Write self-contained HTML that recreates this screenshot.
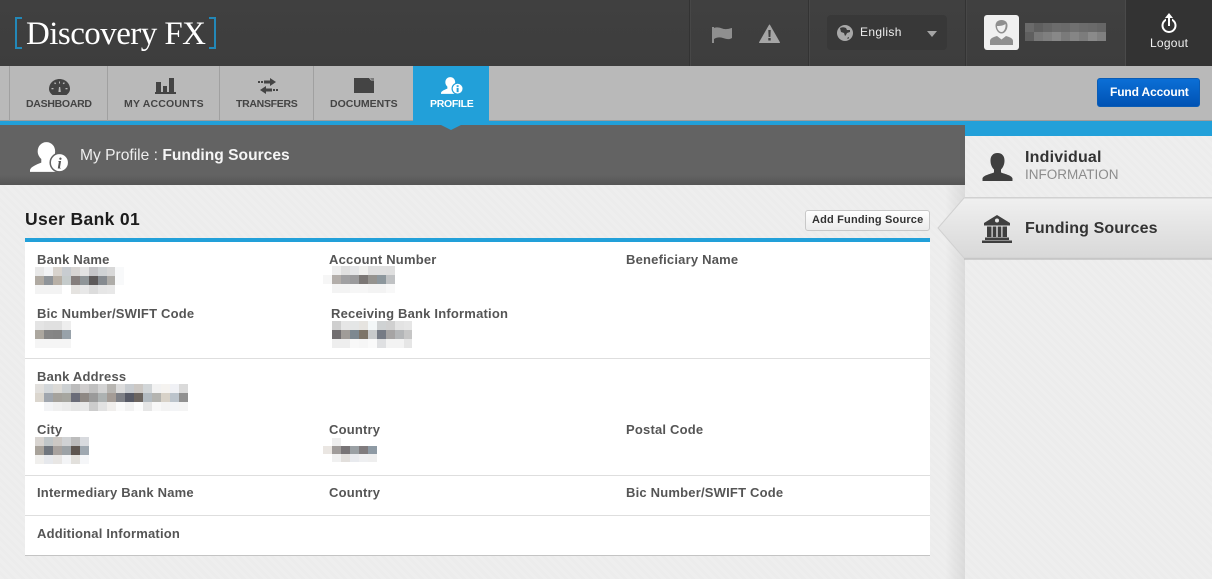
<!DOCTYPE html>
<html><head><meta charset="utf-8"><style>
*{box-sizing:border-box;margin:0;padding:0}
html,body{width:1212px;height:579px;overflow:hidden}
body{position:relative;font-family:"Liberation Sans",sans-serif;background:#ededed}
.a{position:absolute}
.t{position:absolute;white-space:nowrap}
#bg{left:0;top:185px;width:1212px;height:394px;background:repeating-linear-gradient(45deg,#eeeeee 0 3px,#ececec 3px 6px)}
#hd{left:0;top:0;width:1212px;height:66px;background:linear-gradient(#404040,#3d3d3d)}
.dv{top:0;height:66px;background:#333;border-right:1px solid #474747;width:2px}
#nav{left:0;top:66px;width:1212px;height:55px;background:#b9b9b9;border-bottom:1px solid #9d9d9d}
.tb{top:66px;height:55px;width:1px;background:#a0a0a0}
.tl{top:98px;font:bold 10.500px/12px "Liberation Sans",sans-serif;color:#444}
.lb{font:bold 13px/15px "Liberation Sans",sans-serif;color:#555;letter-spacing:.2px}
.hr{left:25px;width:905px;height:1px;background:#dedede}
.p{position:absolute;display:grid;grid-auto-rows:8.87px}
.p i{display:block}
</style></head><body>
<div class="a" id="bg"></div>
<div class="a" id="hd"></div>
<div class="a" style="left:15px;top:17px;width:7px;height:32px;border:2px solid #2388b8;border-right:0"></div>
<div class="t" style="left:26px;top:14px;font:33px/40px 'Liberation Serif',serif;color:#fff;letter-spacing:-.55px">Discovery FX</div>
<div class="a" style="left:209px;top:17px;width:7px;height:32px;border:2px solid #2388b8;border-left:0"></div>
<div class="a dv" style="left:689px"></div><div class="a dv" style="left:808px"></div><div class="a dv" style="left:965px"></div>
<div class="a" style="left:1125px;top:0;width:87px;height:66px;background:#333;border-left:1px solid #4a4a4a"></div>
<svg class="a" style="left:712px;top:26px" width="21" height="17" viewBox="0 0 21 17"><path fill="#8f8f8f" d="M0 1h2v16H0zM2 2c6-2 8 2 13 1 2 0 4-1 5-1v10c-3 2-6 1-9 0-3-1-6-1-9 1z"/></svg>
<svg class="a" style="left:759px;top:24px" width="21" height="19" viewBox="0 0 21 19"><path fill="#a5a5a5" d="M10.500 1l10 17.500H.5z" stroke="#a5a5a5" stroke-linejoin="round"/><path fill="#3f3f3f" d="M9.300 6h2.400l-.3 7H9.600zM9.300 14h2.400v2.500H9.300z"/></svg>
<div class="a" style="left:827px;top:15px;width:120px;height:35px;background:#383838;border-radius:4px"></div>
<svg class="a" style="left:837px;top:25px" width="16" height="16" viewBox="0 0 16 16"><circle cx="8" cy="8" r="8" fill="#a8a8a8"/><path fill="#3a3a3a" d="M3 3c2-1 4-1 6 0l1 2 3 0 0 2-3 1-1 2-1 1-1-3-3-1zM10 13l2-1 0 1-1 1z"/></svg>
<div class="t" style="left:860px;top:25px;font:12px/15px 'Liberation Sans',sans-serif;color:#eee;letter-spacing:.35px">English</div>
<div class="a" style="left:927px;top:31px;border:5px solid transparent;border-top:6px solid #a5a5a5;border-bottom:0"></div>
<div class="a" style="left:984px;top:15px;width:35px;height:35px;background:#f0f0f0;border-radius:3px"></div>
<svg class="a" style="left:990px;top:20px" width="23" height="25" viewBox="0 0 23 25"><path fill="#8f8f8f" d="M11.500 0c4 0 6 2.500 6 5.500 0 4-2.500 8-6 8s-6-4-6-8C5.500 2.500 7.500 0 11.500 0z"/><path fill="#f0f0f0" d="M7 6c2 0 6 0 8.500-2 .5 4-1.500 8-4 8s-4.500-3-4.500-6z"/><path fill="#8f8f8f" d="M0 25v-4c0-3 4-4 7-5l4.500 3.500L16 16c3 1 7 2 7 5v4z"/></svg>
<div class="p" style="left:1025px;top:23px;grid-template-columns:repeat(9,9px);grid-auto-rows:9px">
<i style="background:#6a6a6a"></i><i style="background:#5f5f5f"></i><i style="background:#666"></i><i style="background:#6c6c6c"></i><i style="background:#6a6a6a"></i><i style="background:#707070"></i><i style="background:#6c6c6c"></i><i style="background:#6a6a6a"></i><i style="background:#666"></i>
<i style="background:#5f5f5f"></i><i style="background:#787878"></i><i style="background:#7f7f7f"></i><i style="background:#888"></i><i style="background:#7a7a7a"></i><i style="background:#858585"></i><i style="background:#7c7c7c"></i><i style="background:#8a8a8a"></i><i style="background:#808080"></i>
</div>
<svg class="a" style="left:1160px;top:13px" width="18" height="21" viewBox="0 0 18 21"><circle cx="9" cy="12.500" r="6.500" fill="none" stroke="#fff" stroke-width="2"/><path fill="#333" d="M6 3h6v9H6z"/><path fill="#fff" d="M8 5h2v8H8zM9 0l4 5H5z"/></svg>
<div class="t" style="left:1150px;top:36px;font:12px/14px 'Liberation Sans',sans-serif;color:#f2f2f2;letter-spacing:.25px">Logout</div>

<div class="a" id="nav"></div>
<div class="a tb" style="left:9px"></div><div class="a tb" style="left:107px"></div><div class="a tb" style="left:219px"></div><div class="a tb" style="left:313px"></div>
<div class="a" style="left:413px;top:66px;width:76px;height:55px;background:#22a0d9"></div>
<div class="a" style="left:0;top:121px;width:1212px;height:4px;background:#22a0d9"></div>
<div class="a" style="left:441px;top:125px;border:10px solid transparent;border-top:5px solid #22a0d9;border-bottom:0;z-index:3"></div>
<svg class="a" style="left:49px;top:79px" width="21" height="16" viewBox="0 0 21 16"><path fill="#444" d="M3.500 16C1 14 0 12 0 10 0 4.500 4.500 0 10.500 0S21 4.500 21 10c0 2-1 4-3.500 6z"/><path fill="#b9b9b9" d="M2.500 9h2v1.200h-2zM16.500 9h2v1.200h-2zM5 4l1.200-.8 1 1.300-1.200.8zM10 2.500h1v2h-1zM14.800 3.200l1.200.8-1.300 1.300-1-.8zM10 8l1.200 0 .6 5H9.400z"/></svg>
<svg class="a" style="left:155px;top:78px" width="21" height="16" viewBox="0 0 21 16"><path fill="#444" d="M1 4h5v10H1zM8 8h4v6H8zM14 0h5v14h-5zM0 14h21v2H0z"/></svg>
<svg class="a" style="left:258px;top:77px" width="20" height="18" viewBox="0 0 20 18"><path fill="#444" d="M0 4h2v2H0zM3 4h2v2H3zM6 3.500h6V1l6 4-6 4V6.500H6zM14 11.500H8V9l-6 4 6 4v-2.500h6zM15 12h2v2h-2zM18 12h2v2h-2z"/></svg>
<svg class="a" style="left:354px;top:78px" width="21" height="15" viewBox="0 0 21 15"><path fill="#444" d="M0 0h15l2 2.500h3V15H0z"/><path fill="#7a7a7a" d="M16 0l4 0v2h-2.500z"/></svg>
<svg class="a" style="left:441px;top:77px" width="22" height="17" viewBox="0 0 38 29"><path fill="#fff" d="M16 0c5 0 8.500 4 8.500 9 0 3-1 5.500-2.500 7.500V19c3 1 6 2 8 4v6H0v-2c1-3 6-5 11-7v-3.500C9 14.500 7.500 12 7.500 9 7.500 4 11 0 16 0z"/><circle cx="28.700" cy="20" r="9.500" fill="#fff" stroke="#22a0d9" stroke-width="2"/><path fill="#22a0d9" d="M27 14h3.400v2.800H27zM27 18.500h3.400V26H27z"/></svg>
<div class="t tl" style="left:26px;letter-spacing:-.28px">DASHBOARD</div><div class="t tl" style="left:124px;letter-spacing:.2px">MY ACCOUNTS</div><div class="t tl" style="left:236px;letter-spacing:-.3px">TRANSFERS</div><div class="t tl" style="left:330px">DOCUMENTS</div><div class="t tl" style="left:430px;color:#fff;letter-spacing:-.3px">PROFILE</div>
<div class="a" style="left:1097px;top:78px;width:103px;height:29px;border-radius:3px;background:linear-gradient(#0b6fd6,#0052b4);border:1px solid #0a5cb5"></div>
<div class="t" style="left:1110px;top:85px;font:bold 12px/15px 'Liberation Sans',sans-serif;color:#fff;letter-spacing:-.13px">Fund Account</div>

<div class="a" style="left:0;top:125px;width:965px;height:60px;background:linear-gradient(#636363 0,#636363 50px,#555 60px)"></div>
<svg class="a" style="left:30px;top:142px" width="39" height="30" viewBox="0 0 38 29"><path fill="#fff" d="M16 0c5 0 8.500 4 8.500 9 0 3-1 5.500-2.500 7.500V19c3 1 6 2 8 4v6H0v-2c1-3 6-5 11-7v-3.500C9 14.500 7.500 12 7.500 9 7.500 4 11 0 16 0z"/><circle cx="28.700" cy="20" r="9" fill="#fff" stroke="#636363" stroke-width="1.500"/><text x="28.700" y="25.500" font-family="Liberation Serif,serif" font-style="italic" font-weight="bold" font-size="15" fill="#555" text-anchor="middle">i</text></svg>
<div class="t" style="left:80px;top:146px;font:15.600px/19px 'Liberation Sans',sans-serif;color:#eee">My Profile : <b style="color:#f5f5f5">Funding Sources</b></div>

<div class="t" style="left:25px;top:209px;font:bold 17.500px/20px 'Liberation Sans',sans-serif;color:#1c1c1c;letter-spacing:.35px">User Bank 01</div>
<div class="a" style="left:805px;top:210px;width:125px;height:21px;border:1px solid #c8c8c8;border-radius:3px;background:linear-gradient(#fff,#ececec)"></div>
<div class="t" style="left:812px;top:213px;font:bold 11px/14px 'Liberation Sans',sans-serif;color:#333;letter-spacing:.18px">Add Funding Source</div>
<div class="a" style="left:25px;top:238px;width:905px;height:318px;background:#fff;border-top:4px solid #22a0d9;border-bottom:1px solid #c4c4c4"></div>
<div class="a hr" style="top:358px"></div><div class="a hr" style="top:475px"></div><div class="a hr" style="top:515px"></div>

<div class="t lb" style="left:37px;top:252px">Bank Name</div><div class="t lb" style="left:329px;top:252px">Account Number</div><div class="t lb" style="left:626px;top:252px">Beneficiary Name</div>
<div class="t lb" style="left:37px;top:306px">Bic Number/SWIFT Code</div><div class="t lb" style="left:331px;top:306px">Receiving Bank Information</div>
<div class="t lb" style="left:37px;top:369px">Bank Address</div>
<div class="t lb" style="left:37px;top:422px">City</div><div class="t lb" style="left:329px;top:422px">Country</div><div class="t lb" style="left:626px;top:422px">Postal Code</div>
<div class="t lb" style="left:37px;top:485px">Intermediary Bank Name</div><div class="t lb" style="left:329px;top:485px">Country</div><div class="t lb" style="left:626px;top:485px">Bic Number/SWIFT Code</div>
<div class="t lb" style="left:37px;top:526px">Additional Information</div>

<div class="p" style="left:35px;top:267px;grid-template-columns:repeat(10,8.950px)">
<i style="background:#e8e8e8"></i><i style="background:#f2f3f5"></i><i style="background:#d8d3cd"></i><i style="background:#c8ccd0"></i><i style="background:#d8d5d3"></i><i style="background:#e3e3e3"></i><i style="background:#c5c5c8"></i><i style="background:#d0d3d5"></i><i style="background:#d8d8d8"></i><i style="background:#f8f9fa"></i>
<i style="background:#b0aaa2"></i><i style="background:#8f9499"></i><i style="background:#b8b0a6"></i><i style="background:#c5cbcb"></i><i style="background:#857e7c"></i><i style="background:#8f9598"></i><i style="background:#5d5a5a"></i><i style="background:#868b90"></i><i style="background:#aeaca8"></i><i style="background:#f8f9fa"></i>
<i style="background:#f3f3f3"></i><i style="background:#f3f3f3"></i><i style="background:#f3f3f3"></i><i style="background:#fff"></i><i style="background:#e5e3e0"></i><i style="background:#e8e8e8"></i><i style="background:#dcdcdc"></i><i style="background:#e6e6e6"></i><i style="background:#e8e8e8"></i><i style="background:#fff"></i>
</div>
<div class="p" style="left:332px;top:266px;grid-template-columns:repeat(7,8.950px)">
<i style="background:#eee"></i><i style="background:#e0e0e0"></i><i style="background:#e5e6e8"></i><i style="background:#f0f0ee"></i><i style="background:#e0e0e0"></i><i style="background:#e0e0e0"></i><i style="background:#dfdfdf"></i>
<i style="background:#b3aeaa"></i><i style="background:#a0a0a2"></i><i style="background:#9b9b9d"></i><i style="background:#7b7775"></i><i style="background:#95938f"></i><i style="background:#8d979d"></i><i style="background:#c0c2c4"></i>
<i style="background:#f3f3f3"></i><i style="background:#f3f3f3"></i><i style="background:#f6f6f6"></i><i style="background:#f6f6f6"></i><i style="background:#f3f3f3"></i><i style="background:#f3f3f3"></i><i style="background:#f8f8f8"></i>
</div>
<div class="a" style="left:323px;top:275px;width:9px;height:9px;background:#f6f6f6"></div>
<div class="p" style="left:35px;top:321px;grid-template-columns:repeat(4,8.950px)">
<i style="background:#e4e4e4"></i><i style="background:#e0e0e0"></i><i style="background:#e0e0e0"></i><i style="background:#eee"></i>
<i style="background:#aca79f"></i><i style="background:#868686"></i><i style="background:#848484"></i><i style="background:#98a2aa"></i>
<i style="background:#f5f5f5"></i><i style="background:#f5f5f5"></i><i style="background:#f5f5f5"></i><i style="background:#f5f5f5"></i>
</div>
<div class="p" style="left:332px;top:321px;grid-template-columns:repeat(9,8.950px)">
<i style="background:#cfcfcf"></i><i style="background:#e6e6e6"></i><i style="background:#e4e6e6"></i><i style="background:#e6e4e0"></i><i style="background:#f3f7f8"></i><i style="background:#cfd2d3"></i><i style="background:#d0d0d0"></i><i style="background:#e3e3e3"></i><i style="background:#e6e6e6"></i>
<i style="background:#716e70"></i><i style="background:#a09c98"></i><i style="background:#7d8890"></i><i style="background:#7d7468"></i><i style="background:#c8cacb"></i><i style="background:#767b85"></i><i style="background:#a6a4a4"></i><i style="background:#b4b6b8"></i><i style="background:#c6c6c6"></i>
<i style="background:#eee"></i><i style="background:#eee"></i><i style="background:#f8f8f8"></i><i style="background:#f6f6f6"></i><i style="background:#fafafa"></i><i style="background:#dfe0e2"></i><i style="background:#f3f3f3"></i><i style="background:#f3f3f3"></i><i style="background:#e6e6e6"></i>
</div>
<div class="p" style="left:35px;top:384px;grid-template-columns:repeat(17,9px)">
<i style="background:#e2e0dd"></i><i style="background:#d3d7da"></i><i style="background:#dcdad6"></i><i style="background:#ccd0d2"></i><i style="background:#bcbcbc"></i><i style="background:#cfcdcd"></i><i style="background:#c0c0c0"></i><i style="background:#d3d3d3"></i><i style="background:#b8b6b2"></i><i style="background:#dcdcdc"></i><i style="background:#c8ccd0"></i><i style="background:#ccc8c4"></i><i style="background:#d2d6d8"></i><i style="background:#f2f2f2"></i><i style="background:#f5f3f0"></i><i style="background:#f0f1f5"></i><i style="background:#dadada"></i>
<i style="background:#dbd6ce"></i><i style="background:#a0a6ae"></i><i style="background:#a5a29c"></i><i style="background:#a6a6a0"></i><i style="background:#6a6c78"></i><i style="background:#8e8884"></i><i style="background:#9a9a9a"></i><i style="background:#adb2b2"></i><i style="background:#a49c96"></i><i style="background:#7e8086"></i><i style="background:#575a66"></i><i style="background:#6c6560"></i><i style="background:#b2bac0"></i><i style="background:#b4b4b0"></i><i style="background:#d8d2c8"></i><i style="background:#bcc4cc"></i><i style="background:#909090"></i>
<i style="background:#fff"></i><i style="background:#f3f4f6"></i><i style="background:#f0f0f0"></i><i style="background:#ececec"></i><i style="background:#e6e6e6"></i><i style="background:#e8e8e8"></i><i style="background:#ccc"></i><i style="background:#e2e2e2"></i><i style="background:#f0eeec"></i><i style="background:#fafafa"></i><i style="background:#f2f2f2"></i><i style="background:#fcfcfc"></i><i style="background:#e6e6e6"></i><i style="background:#f8f8f8"></i><i style="background:#f3f3f3"></i><i style="background:#f3f4f6"></i><i style="background:#f4f4f4"></i>
</div>
<div class="p" style="left:35px;top:437px;grid-template-columns:repeat(6,9px)">
<i style="background:#d8d4d0"></i><i style="background:#c0c6c8"></i><i style="background:#ccc8c4"></i><i style="background:#d0d2d4"></i><i style="background:#bcbcbc"></i><i style="background:#d8dade"></i>
<i style="background:#a8a29a"></i><i style="background:#70767e"></i><i style="background:#a8a29e"></i><i style="background:#9ca2a6"></i><i style="background:#5e5650"></i><i style="background:#9fa8b0"></i>
<i style="background:#f0efed"></i><i style="background:#e6e8ec"></i><i style="background:#e8e6e4"></i><i style="background:#f3f4f6"></i><i style="background:#e2e0dc"></i><i style="background:#f5f6f8"></i>
</div>
<div class="p" style="left:332px;top:438px;grid-template-columns:repeat(5,9px);grid-auto-rows:8px">
<i style="background:#eee"></i><i style="background:#fff"></i><i style="background:#fff"></i><i style="background:#fff"></i><i style="background:#fff"></i>
<i style="background:#a09c9a"></i><i style="background:#787476"></i><i style="background:#9aa0a4"></i><i style="background:#807c7e"></i><i style="background:#8e9aa4"></i>
<i style="background:#f0f0f0"></i><i style="background:#e2dfdc"></i><i style="background:#e8eaee"></i><i style="background:#eeeff1"></i><i style="background:#eee"></i>
</div>
<div class="a" style="left:323px;top:446px;width:9px;height:8px;background:#eae6e2"></div>

<div class="a" style="left:945px;top:185px;width:20px;height:394px;background:linear-gradient(90deg,rgba(0,0,0,0),rgba(0,0,0,.08))"></div>
<div class="a" style="left:965px;top:121px;width:247px;height:458px;background:repeating-linear-gradient(45deg,#eeeeee 0 3px,#ececec 3px 6px)"></div>
<div class="a" style="left:965px;top:121px;width:247px;height:15px;background:#22a0d9"></div>
<div class="a" style="left:965px;top:197px;width:247px;height:1px;background:#d2d2d2"></div>
<svg class="a" style="left:936px;top:197px" width="276" height="66" viewBox="0 0 276 66"><defs><linearGradient id="g" x1="0" y1="0" x2="0" y2="1"><stop offset="0" stop-color="#f0f0f0"/><stop offset="1" stop-color="#d8d8d8"/></linearGradient></defs><path d="M2 31L28 1h252v60H28z" fill="url(#g)" stroke="#d0d0d0" stroke-width="1"/><path d="M28 62h248" stroke="#c2c2c2" stroke-width="1.500"/></svg>
<svg class="a" style="left:982px;top:153px" width="31" height="28" viewBox="0 0 31 28"><path fill="#3f3f3f" d="M15.500 0c4.500 0 7 3 7 7.500 0 4-1.500 7-3.500 9v3c4 1.500 11 3 11.500 6V28H.5v-2.500c.5-3 7.500-4.500 11.500-6v-3c-2-2-3.500-5-3.500-9C8.500 3 11 0 15.500 0z"/></svg>
<svg class="a" style="left:982px;top:215px" width="30" height="28" viewBox="0 0 30 28"><path fill="#3f3f3f" d="M15 0l13 8v2.500H2V8zM5 11.500h4.500V22H5zM10.700 11.500h3.600V22h-3.600zM15.700 11.500h3.600V22h-3.600zM20.500 11.500H25V22h-4.500zM3 22.500h24v2.500H3zM0 25.500h30V28H0z"/><circle cx="15" cy="5.500" r="2" fill="#e8e8e8"/></svg>
<div class="t" style="left:1025px;top:148px;font:bold 16px/19px 'Liberation Sans',sans-serif;color:#333;letter-spacing:.2px">Individual</div>
<div class="t" style="left:1025px;top:167px;font:13.500px/16px 'Liberation Sans',sans-serif;color:#8c8c8c">INFORMATION</div>
<div class="t" style="left:1025px;top:219px;font:bold 16px/19px 'Liberation Sans',sans-serif;color:#333;letter-spacing:.13px">Funding Sources</div>
</body></html>
